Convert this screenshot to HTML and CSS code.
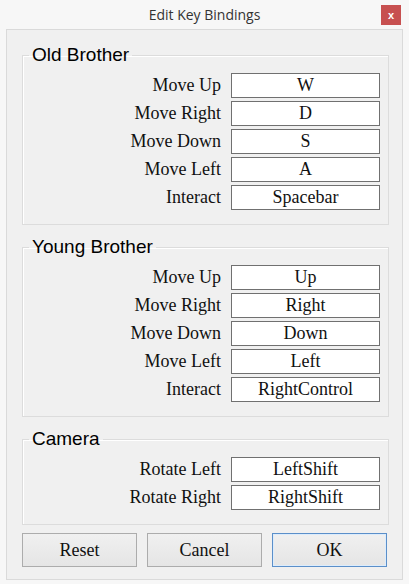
FILE: index.html
```html
<html>
<head>
<title>Edit Key Bindings</title>
<link rel="stylesheet" href="styles.css">
</head>
<body>

<div class="titlebar">
  <span class="title">Edit Key Bindings</span>
  <button class="close">x</button>
</div>

<div class="panel">
  <fieldset class="group">
    <legend>Old Brother</legend>
    <div class="rows">
      <label>Move Up</label><span class="key">W</span>
      <label>Move Right</label><span class="key">D</span>
      <label>Move Down</label><span class="key">S</span>
      <label>Move Left</label><span class="key">A</span>
      <label>Interact</label><span class="key">Spacebar</span>
    </div>
  </fieldset>

  <fieldset class="group">
    <legend>Young Brother</legend>
    <div class="rows">
      <label>Move Up</label><span class="key">Up</span>
      <label>Move Right</label><span class="key">Right</span>
      <label>Move Down</label><span class="key">Down</span>
      <label>Move Left</label><span class="key">Left</span>
      <label>Interact</label><span class="key">RightControl</span>
    </div>
  </fieldset>

  <fieldset class="group">
    <legend>Camera</legend>
    <div class="rows">
      <label>Rotate Left</label><span class="key">LeftShift</span>
      <label>Rotate Right</label><span class="key">RightShift</span>
    </div>
  </fieldset>

  <div class="actions">
    <button class="btn">Reset</button>
    <button class="btn">Cancel</button>
    <button class="btn default">OK</button>
  </div>
</div>

</body>
</html>
```

FILE: styles.css
```css
body {
  margin: 0;
  background-color: #f7f7f7;
  font-family: 'Liberation Serif', serif;
  color: #111;
}

.titlebar {
  height: 29px;
  display: grid;
  grid-template-columns: 1fr auto 1fr;
  align-items: center;
}

.title {
  grid-column: 2;
  font-family: 'Open Sans', sans-serif;
  font-size: 14px;
  color: #333;
}

.close {
  grid-column: 3;
  justify-self: end;
  margin-right: 8px;
  width: 20px;
  height: 20px;
  padding: 0;
  border: none;
  background-color: #c75050;
  color: #fff;
  font-family: 'Liberation Sans', sans-serif;
  font-size: 11px;
  font-weight: bold;
  line-height: 18px;
}

.panel {
  margin: 0 6px;
  height: 551px;
  border: 1px solid #dadada;
  background-color: #f0f0f0;
  padding: 14px 13px 0 15px;
  box-sizing: border-box;
}

.group {
  margin: 0 0 11px 0;
  padding: 7px 8px 14px 0;
  border: 1px solid #dcdcdc;
  box-shadow: inset 1px 1px 0 #fff;
}

.group legend {
  margin-left: 6px;
  padding: 0 3px;
  font-family: 'Liberation Sans', sans-serif;
  font-size: 19px;
  line-height: 22px;
  color: #000;
}

.rows {
  display: grid;
  grid-template-columns: 1fr 149px;
  grid-auto-rows: 25px;
  column-gap: 10px;
  row-gap: 3px;
  font-size: 18px;
}

.rows label {
  text-align: right;
  line-height: 25px;
}

.key {
  background-color: #fff;
  border: 1px solid #707070;
  text-align: center;
  line-height: 23px;
}

.actions {
  display: flex;
  gap: 10px;
  margin-top: -3px;
}

.btn {
  width: 115px;
  height: 34px;
  border: 1px solid #acacac;
  background: linear-gradient(#f0f0f0, #e5e5e5);
  font-family: 'Liberation Serif', serif;
  font-size: 18px;
  color: #111;
}

.btn.default {
  border-color: #5b8fc9;
  box-shadow: inset 0 0 0 1px #dcecfc;
}
```
